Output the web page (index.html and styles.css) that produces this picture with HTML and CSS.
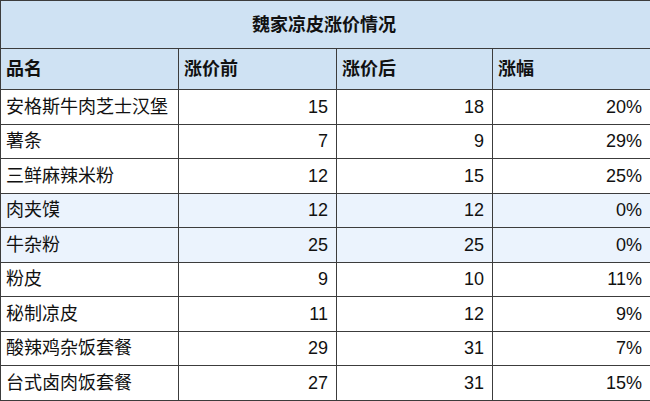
FILE: index.html
```html
<!DOCTYPE html>
<html lang="zh">
<head>
<meta charset="utf-8">
<title>魏家凉皮涨价情况</title>
<link rel="stylesheet" href="styles.css">
</head>
<body>
<table class="sheet">
  <colgroup>
    <col class="c1"><col class="c2"><col class="c3"><col class="c4">
  </colgroup>
  <thead>
    <tr class="title-row"><th colspan="4" class="title">魏家凉皮涨价情况</th></tr>
    <tr class="head-row"><th>品名</th><th>涨价前</th><th>涨价后</th><th>涨幅</th></tr>
  </thead>
  <tbody>
    <tr><td>安格斯牛肉芝士汉堡</td><td class="num">15</td><td class="num">18</td><td class="num">20%</td></tr>
    <tr><td>薯条</td><td class="num">7</td><td class="num">9</td><td class="num">29%</td></tr>
    <tr><td>三鲜麻辣米粉</td><td class="num">12</td><td class="num">15</td><td class="num">25%</td></tr>
    <tr class="hl"><td>肉夹馍</td><td class="num">12</td><td class="num">12</td><td class="num">0%</td></tr>
    <tr class="hl"><td>牛杂粉</td><td class="num">25</td><td class="num">25</td><td class="num">0%</td></tr>
    <tr><td>粉皮</td><td class="num">9</td><td class="num">10</td><td class="num">11%</td></tr>
    <tr><td>秘制凉皮</td><td class="num">11</td><td class="num">12</td><td class="num">9%</td></tr>
    <tr><td>酸辣鸡杂饭套餐</td><td class="num">29</td><td class="num">31</td><td class="num">7%</td></tr>
    <tr><td>台式卤肉饭套餐</td><td class="num">27</td><td class="num">31</td><td class="num">15%</td></tr>
  </tbody>
</table>
</body>
</html>
```

FILE: styles.css
```css
html, body {
  margin: 0;
  padding: 0;
  background: #ffffff;
}

body {
  font-family: "Liberation Sans", "Noto Sans CJK SC", sans-serif;
  font-size: 18px;
  color: #111;
}

.sheet {
  width: 650px;
  border-collapse: collapse;
  table-layout: fixed;
}

.c1 { width: 178px; }
.c2 { width: 158px; }
.c3 { width: 156px; }
.c4 { width: 158px; }

.sheet th,
.sheet td {
  border: 1.5px solid #3c3c3c;
  padding: 0 8px 0 5px;
  line-height: 20px;
  white-space: nowrap;
  overflow: hidden;
}

.title-row { height: 48px; }
.head-row { height: 41px; }
tbody tr { height: 34.5px; }

.sheet th {
  background: #cfe2f3;
  font-weight: bold;
  text-align: left;
  color: #111;
}

.sheet th.title {
  text-align: center;
}

.sheet td {
  text-align: left;
}

.sheet td.num {
  text-align: right;
}

.hl td {
  background: #ebf3fd;
}
```
